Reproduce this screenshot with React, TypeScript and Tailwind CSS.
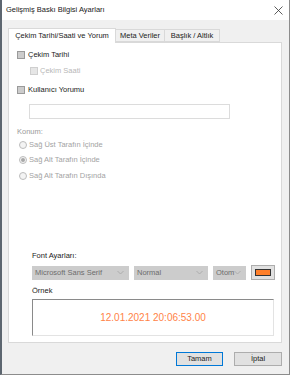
import React from "react";

const ui = "font-['Liberation_Sans',Arial,sans-serif]";

function Check({ disabled }: { disabled?: boolean }) {
  return (
    <span
      className={`inline-block h-[8px] w-[8px] border ${
        disabled ? "border-[#cfcfcf] bg-[#e6e6e6]" : "border-[#9a9a9a] bg-[#cccccc]"
      }`}
    />
  );
}

function Radio({ checked }: { checked?: boolean }) {
  return (
    <span className="relative inline-flex h-[8px] w-[8px] items-center justify-center rounded-full border border-[#bcbcbc] bg-[#f4f4f4]">
      {checked && <span className="h-[4px] w-[4px] rounded-full bg-[#a8a8a8]" />}
    </span>
  );
}

function Chevron() {
  return (
    <svg width="7" height="5" viewBox="0 0 7 5" className="shrink-0">
      <path d="M0.5 1 L3.5 4 L6.5 1" fill="none" stroke="#a9a9a9" strokeWidth="0.9" />
    </svg>
  );
}

function Select({ label, width }: { label: string; width: string }) {
  return (
    <div
      className={`flex h-[14px] items-center justify-between border border-[#cccccc] bg-[#cccccc] pl-[2px] pr-[4px] ${width}`}
    >
      <span className="text-[7.5px] text-[#6d6d6d]">{label}</span>
      <Chevron />
    </div>
  );
}

export default function App() {
  return (
    <div className={`${ui} flex h-[375px] w-[290px] flex-col overflow-hidden bg-white text-[7.5px] text-[#222]`}>
      <div className="flex h-full flex-col border-l-[2px] border-r border-b border-l-[#5d6670] border-r-[#8c8c8c] border-b-[#8c8c8c]">
        {/* title bar */}
        <div className="flex h-[20px] shrink-0 items-center justify-between bg-white pl-[4px] pr-[6px]">
          <span className="text-[7.5px] text-[#1a1a1a]">Gelişmiş Baskı Bilgisi Ayarları</span>
          <svg width="9" height="9" viewBox="0 0 9 9">
            <path d="M0.5 0.5 L8.5 8.5 M8.5 0.5 L0.5 8.5" stroke="#333" strokeWidth="0.8" />
          </svg>
        </div>

        {/* body */}
        <div className="flex flex-1 flex-col bg-[#f0f0f0] px-[6px] pt-[8px]">
          {/* tabs */}
          <div className="flex h-[14px] items-end">
            <div className="relative z-10 -mb-px flex h-[15px] w-[108px] items-center justify-center border border-b-0 border-[#d9d9d9] bg-white">
              Çekim Tarihi/Saati ve Yorum
            </div>
            <div className="flex h-[13px] w-[49px] items-center justify-center border border-l-0 border-[#d9d9d9] bg-[#f0f0f0]">
              Meta Veriler
            </div>
            <div className="flex h-[13px] w-[55px] items-center justify-center border border-l-0 border-[#d9d9d9] bg-[#f0f0f0]">
              Başlık / Altlık
            </div>
          </div>

          {/* panel */}
          <div className="flex h-[301px] w-[274px] flex-col border border-[#d9d9d9] bg-white pl-[8px]">
            <div className="mt-[7px] flex h-[10px] items-center gap-[3px]">
              <Check />
              <span>Çekim Tarihi</span>
            </div>
            <div className="mt-[6px] flex h-[10px] items-center gap-[2px] pl-[13px]">
              <Check disabled />
              <span className="text-[#b8b8b8]">Çekim Saati</span>
            </div>
            <div className="mt-[9px] flex h-[10px] items-center gap-[3px]">
              <Check />
              <span>Kullanıcı Yorumu</span>
            </div>
            <div className="ml-[12px] mt-[9px] h-[15px] w-[201px] border border-[#dcdcdc] bg-white" />
            <div className="mt-[8px] flex h-[10px] items-center text-[#9a9a9a]">Konum:</div>
            <div className="mt-[3px] flex h-[10px] items-center gap-[2px] pl-[2px] text-[#a3a3a3]">
              <Radio />
              <span>Sağ Üst Tarafın İçinde</span>
            </div>
            <div className="mt-[5px] flex h-[10px] items-center gap-[2px] pl-[2px] text-[#a3a3a3]">
              <Radio checked />
              <span>Sağ Alt Tarafın İçinde</span>
            </div>
            <div className="mt-[6px] flex h-[10px] items-center gap-[2px] pl-[2px] text-[#a3a3a3]">
              <Radio />
              <span>Sağ Alt Tarafın Dışında</span>
            </div>

            <div className="pl-[15px]">
              <div className="mt-[70px] flex h-[10px] items-center">Font Ayarları:</div>
              <div className="mt-[4px] flex items-center gap-[5px]">
                <Select label="Microsoft Sans Serif" width="w-[97px]" />
                <Select label="Normal" width="w-[74px]" />
                <Select label="Otom" width="w-[33px]" />
                <div className="flex h-[15px] w-[24px] items-center justify-center border border-[#adadad] bg-[#e1e1e1]">
                  <div className="h-[7px] w-[16px] border border-[#333] bg-[#ff7f2a]" />
                </div>
              </div>
              <div className="mt-[6px] flex h-[10px] items-center">Örnek</div>
              <div className="mt-[3px] flex h-[37px] w-[242px] items-center justify-center border border-[#e3e3e3] border-l-[#8a8a8a] border-t-[#8a8a8a] bg-white">
                <span className="text-[10px] text-[#ff8347]">12.01.2021 20:06:53.00</span>
              </div>
            </div>
          </div>

          {/* buttons */}
          <div className="mt-[9px] flex justify-end gap-[11px] pr-[1px]">
            <button className="flex h-[14px] w-[47px] items-center justify-center border border-[#0078d7] bg-[#e1e1e1] text-[7.5px] text-[#222]">
              Tamam
            </button>
            <button className="flex h-[14px] w-[48px] items-center justify-center border border-[#adadad] bg-[#e1e1e1] text-[7.5px] text-[#222]">
              İptal
            </button>
          </div>
        </div>
      </div>
    </div>
  );
}
